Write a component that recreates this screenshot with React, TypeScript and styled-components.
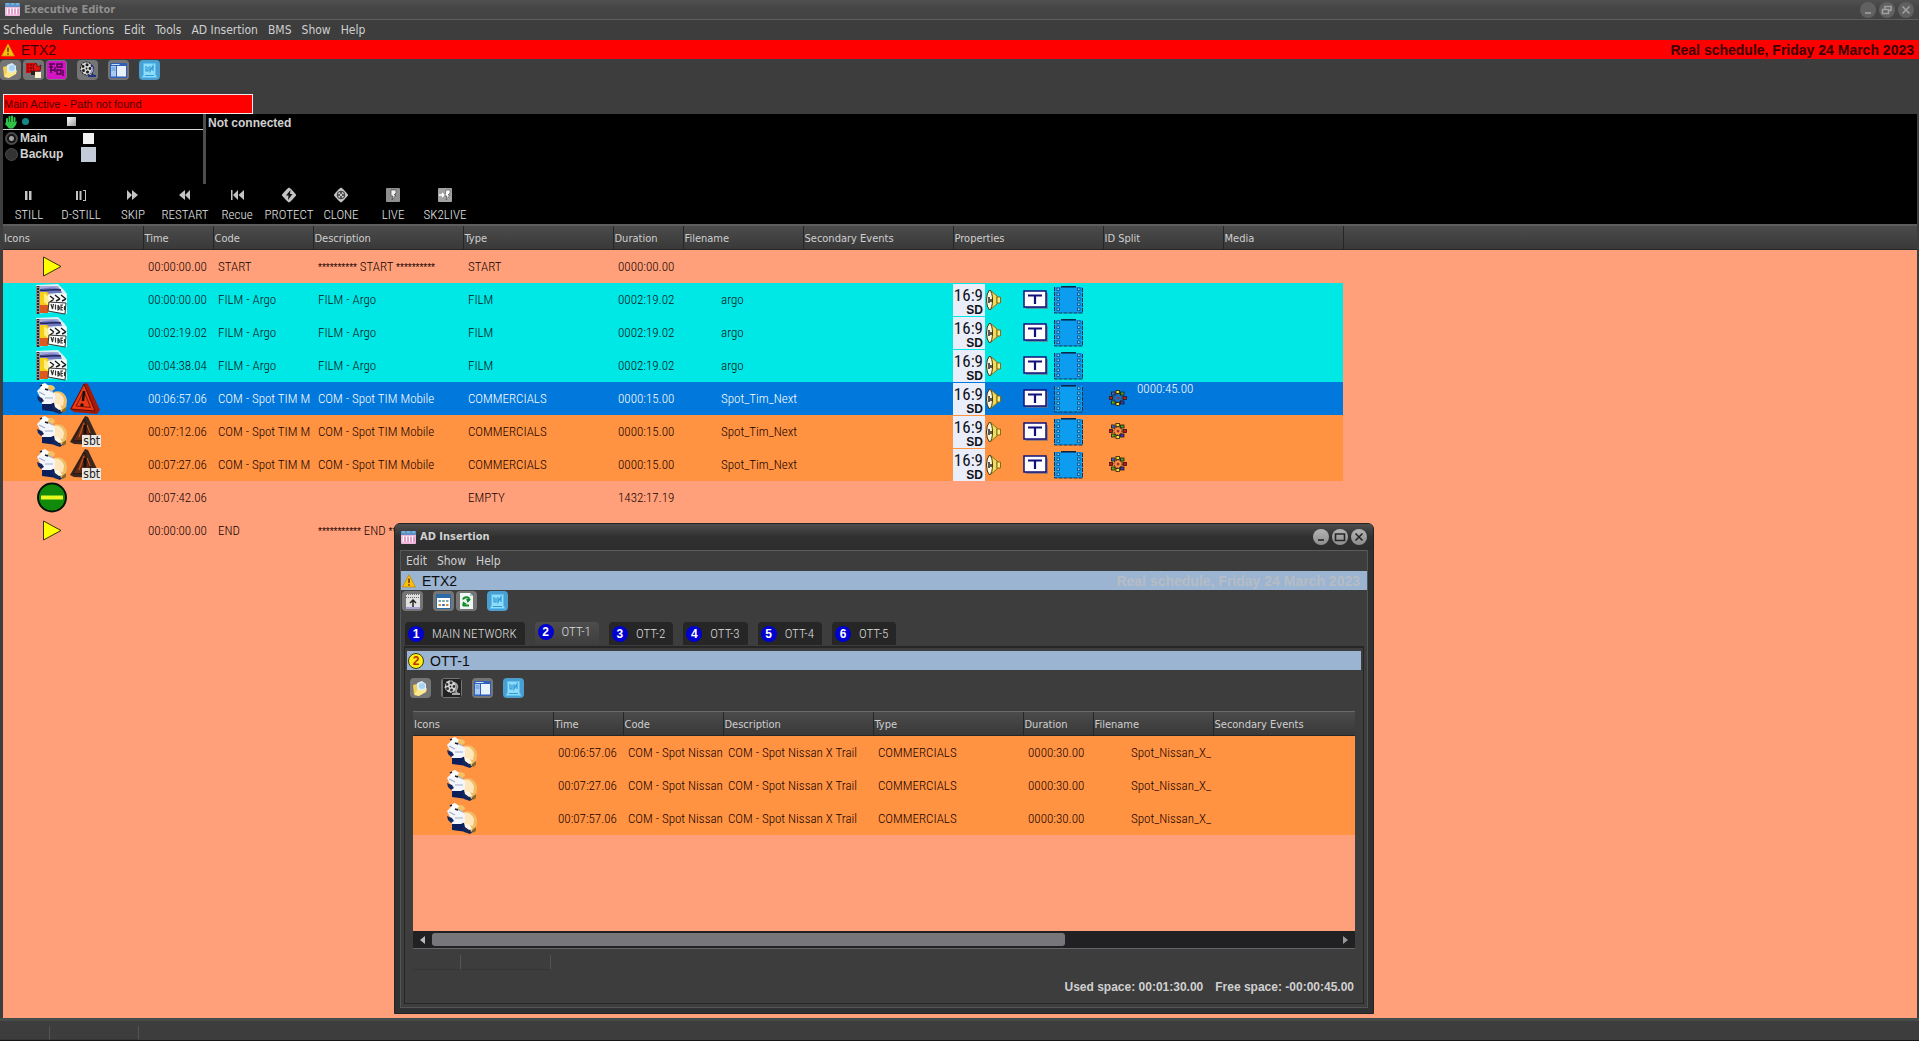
import React from "react";
import styled, { createGlobalStyle, css } from "styled-components";

const Global = createGlobalStyle`
  *, *::before, *::after { box-sizing: border-box; }
  body { margin: 0; background: #3d3d3d; overflow: hidden; }
  button, input { font: inherit; color: inherit; margin: 0; }
`;

const narrow = `"Roboto Condensed", "Liberation Sans Narrow", "Liberation Sans", sans-serif`;
const sans = `"Liberation Sans", Arial, sans-serif`;
const ui = `"DejaVu Sans Condensed", "Noto Sans", sans-serif`;

const Screen = styled.div`
  position: relative;
  display: flex;
  flex-direction: column;
  height: 100vh;
  background: #3d3d3d;
  color: #d0d0d0;
  font: 12px/16px ${ui};
  border-bottom: 1px solid #161616;
`;

const TitleBar = styled.header<{ $dialog?: boolean }>`
  display: flex;
  align-items: center;
  gap: 4px;
  ${(p) =>
    p.$dialog
      ? css`
          height: 26px;
          padding: 0 6px;
          background: linear-gradient(#4d4d4d, #303030 50%, #2d2d2d);
          color: #d0d0d0;
          border-radius: 4px 4px 0 0;
        `
      : css`
          height: 20px;
          padding: 0 5px;
          background: linear-gradient(#505050, #454545 40%, #434343);
          color: #8f8f8f;
          border-bottom: 1px solid #5e5e5e;
        `}
`;

const WindowTitle = styled.h1`
  flex: 1;
  margin: 0;
  font: bold 11px/16px ${ui};
`;

const WindowButtons = styled.div`
  display: flex;
  gap: 3px;
`;

const RoundButton = styled.button<{ $bright?: boolean }>`
  display: flex;
  width: 16px;
  height: 16px;
  padding: 0;
  border: 0;
  border-radius: 50%;
  background: ${(p) => (p.$bright ? "linear-gradient(#b4b4b4, #8d8d8d)" : "#616161")};
  color: ${(p) => (p.$bright ? "#262626" : "#a0a0a0")};
`;

const MenuBar = styled.nav<{ $dialog?: boolean }>`
  display: flex;
  align-items: center;
  gap: 10px;
  height: 20px;
  padding: 0 ${(p) => (p.$dialog ? 5 : 3)}px;
`;

const MenuItem = styled.button`
  padding: 0;
  border: 0;
  background: none;
  font: 12px/16px ${ui};
  white-space: nowrap;
`;

const Banner = styled.div<{ $tone: "alert" | "calm" }>`
  display: flex;
  align-items: center;
  gap: 6px;
  height: 19px;
  padding: 0 ${(p) => (p.$tone === "alert" ? 5 : 7)}px 0 1px;
  background: ${(p) => (p.$tone === "alert" ? "#ff0000" : "#9ab4d2")};
  color: ${(p) => (p.$tone === "alert" ? "#3c0000" : "#0c0c0c")};
  font: 14px/18px ${sans};
`;

const BannerDate = styled.strong<{ $faint?: boolean }>`
  margin-left: auto;
  color: ${(p) => (p.$faint ? "#b6bcc4" : "#3c0000")};
`;

const ToolBar = styled.div<{ $inset?: number }>`
  display: flex;
  gap: 2px;
  padding: 1px ${(p) => p.$inset ?? 0}px;
`;

const ToolButton = styled.button<{ $sky?: boolean; $apart?: boolean }>`
  display: flex;
  align-items: center;
  justify-content: center;
  width: 21px;
  height: 20px;
  margin-left: ${(p) => (p.$apart ? 8 : 0)}px;
  padding: 0;
  border: 0;
  border-radius: 4px;
  background: ${(p) => (p.$sky ? "#4a9fd0" : "#757575")};
`;

const StatusBox = styled.output`
  display: block;
  width: 250px;
  margin: 13px 0 0 3px;
  padding: 0;
  border: 1px solid #f4e6e6;
  background: #ff0000;
  color: #4a0000;
  font: 11px/18px ${sans};
`;

const Deck = styled.section`
  margin: 0 2px 0 3px;
  background: #000;
`;

const DeckTop = styled.div`
  display: flex;
  height: 70px;
`;

const Channels = styled.div`
  width: 203px;
  border-right: 3px solid #4d4d4d;
  font: bold 12px/16px ${sans};
`;

const ChannelHead = styled.div`
  display: flex;
  align-items: center;
  height: 16px;
  padding-left: 1px;
  border-bottom: 1px solid #d8d8d8;
`;

const Dot = styled.span`
  width: 7px;
  height: 7px;
  margin: 0 38px 0 4px;
  border-radius: 50%;
  background: #158787;
`;

const Cube = styled.span`
  width: 9px;
  height: 9px;
  background: linear-gradient(135deg, #fff, #9a9a9a);
`;

const Channel = styled.div`
  display: grid;
  grid-template-columns: 75px 20px;
  align-items: center;
  justify-items: center;
  height: 16px;
  & > label {
    justify-self: stretch;
    display: flex;
    align-items: center;
    gap: 2px;
    padding-left: 2px;
  }
  input {
    appearance: none;
    width: 13px;
    height: 13px;
    border: 1px solid #4b4b4b;
    border-radius: 50%;
    background: #333;
  }
  input:checked {
    background: radial-gradient(circle, #a2a2a2 0 2px, #161616 3px);
    border: 2px solid #4b4b4b;
  }
`;

const Swatch = styled.span<{ $size: number; $color: string }>`
  width: ${(p) => p.$size}px;
  height: ${(p) => p.$size}px;
  background: ${(p) => p.$color};
`;

const Connection = styled.p`
  margin: 1px 2px;
  font: bold 12px/16px ${sans};
`;

const Transport = styled.div`
  display: flex;
  height: 40px;
`;

const TransportButton = styled.button`
  display: flex;
  flex-direction: column;
  align-items: center;
  gap: 4px;
  width: 52px;
  padding: 3px 0 0;
  border: 0;
  background: none;
  color: #e6e6e6;
  font: 300 13px/16px ${narrow};
`;

const List = styled.div<{ $dialog?: boolean }>`
  overflow: hidden;
  background: #ffa07a;
  ${(p) =>
    p.$dialog
      ? css`
          height: 220px;
          margin: 12px 6px 0;
          border-top: 1px solid #6a6a6a;
        `
      : css`
          flex: 1;
          margin: 0 2px 0 3px;
          border-top: 2px solid #5d5d5d;
        `}
`;

const HeadBand = styled.div`
  background: linear-gradient(#4b4b4b, #393939);
  height: 24px;
  border-bottom: 1px solid #262626;
  margin-bottom: -24px;
`;

const Table = styled.table`
  table-layout: fixed;
  border-collapse: collapse;
  width: 0;
`;

const Th = styled.th`
  height: 24px;
  padding: 1px 0 0 1px;
  border-right: 1px solid #262626;
  color: #cfcfcf;
  font: 11px/16px ${ui};
  text-align: left;
  white-space: nowrap;
`;

type Tone = "plain" | "film" | "selected" | "spot";
const tones: Record<Tone, [string, string]> = {
  plain: ["transparent", "#140000"],
  film: ["#00e8e6", "#001014"],
  selected: ["#0078dc", "#ffffff"],
  spot: ["#ff9342", "#160000"],
};

const Tr = styled.tr<{ $tone: Tone }>`
  background: ${(p) => tones[p.$tone][0]};
  color: ${(p) => tones[p.$tone][1]};
`;

const Td = styled.td<{ $pad?: number }>`
  height: 33px;
  padding: 0 0 0 ${(p) => p.$pad ?? 5}px;
  overflow: hidden;
  font: 300 13px/16px ${narrow};
  white-space: nowrap;
`;

const Stars = styled.span`
  font: 10px/12px ${sans};
`;

const Icons = styled.div`
  display: flex;
  gap: 2px;
  height: 32px;
  align-items: center;
  svg { display: block; }
`;

const Ratio = styled.div`
  display: grid;
  width: 32px;
  height: 32px;
  padding: 1px 2px 0 0;
  background: #e9eefa;
  color: #101018;
  text-align: right;
  font: 400 17px/20px ${narrow};
  b { font: bold 12px/10px ${sans}; }
`;

const Props = styled(Icons)`
  gap: 0;
  & > svg:nth-child(3) { margin-left: 21px; }
  & > svg:nth-child(4) { margin-left: 6px; }
`;

const Split = styled.div`
  display: flex;
  gap: 10px;
  height: 33px;
  align-items: center;
  padding-bottom: 1px;
  span { align-self: flex-start; line-height: 14px; }
`;

const StatusBar = styled.footer<{ $dialog?: boolean }>`
  display: flex;
  ${(p) =>
    p.$dialog
      ? "height: 15px; margin: 6px 6px 0;"
      : "height: 22px; padding-top: 5px; border-top: 3px solid #454b48;"}
`;

const StatusCell = styled.span<{ $w: number }>`
  width: ${(p) => p.$w}px;
  border-right: 1px solid #545454;
  border-bottom: 1px solid #363636;
`;

const Dialog = styled.section`
  position: absolute;
  left: 394px;
  top: 523px;
  width: 980px;
  border: 1px solid #232323;
  border-radius: 6px 6px 0 0;
  background: #2e3032;
`;

const DialogBody = styled.div`
  margin: 0 5px 5px;
  padding-bottom: 3px;
  border: 1px solid #555;
  border-top-color: #5c5c5c;
  background: #3d3d3d;
`;

const TabList = styled.div`
  display: flex;
  align-items: flex-end;
  gap: 10px;
  height: 34px;
  padding: 0 4px;
`;

const Tab = styled.button<{ $active?: boolean }>`
  display: flex;
  align-items: center;
  gap: 8px;
  height: ${(p) => (p.$active ? 24 : 23)}px;
  padding: 0 8px 0 3px;
  padding-bottom: ${(p) => (p.$active ? 4 : 0)}px;
  margin-bottom: ${(p) => (p.$active ? 0 : 1)}px;
  border: 0;
  border-radius: 4px 4px 0 0;
  background: ${(p) => (p.$active ? "linear-gradient(#4d4d4d, #3d3d3d)" : "#262626")};
  color: #dedede;
  font: 300 13px/16px ${narrow};
`;

const Badge = styled.span<{ $gold?: boolean }>`
  width: 16px;
  height: 16px;
  border-radius: 50%;
  background: ${(p) => (p.$gold ? "#ffee10" : "#0000d0")};
  color: ${(p) => (p.$gold ? "#c03000" : "#fff")};
  border: ${(p) => (p.$gold ? "1px solid #3a3a10" : "0")};
  font: bold 12px/${(p) => (p.$gold ? 14 : 16)}px ${sans};
  text-align: center;
`;

const TabPanel = styled.div`
  margin: 0 3px;
  padding: 3px 2px 8px;
  border: 1px solid #262626;
  border-top-width: 2px;
`;

const PanelTools = styled.div`
  padding-top: 7px;
`;

const ScrollBar = styled.div`
  display: flex;
  align-items: center;
  height: 18px;
  margin: 0 6px;
  padding: 2px 0;
  border-bottom: 1px solid #666;
  background: #212123;
`;

const ScrollArrow = styled.button`
  display: flex;
  align-items: center;
  justify-content: center;
  width: 19px;
  padding: 0;
  border: 0;
  background: none;
`;

const ScrollTrack = styled.div`
  flex: 1;
  height: 13px;
`;

const ScrollThumb = styled.div`
  width: 70%;
  height: 13px;
  border-radius: 3px;
  background: #77777b;
`;

const Totals = styled.div`
  display: flex;
  justify-content: flex-end;
  gap: 12px;
  padding: 9px 7px 0;
  font: bold 12px/16px ${sans};
`;

/* ---------- drawings ---------- */

const AppIcon = () => (
  <svg width="15" height="13" viewBox="0 0 15 13">
    <rect width="15" height="13" rx="1" fill="#f0b8dc" />
    <rect width="15" height="4" fill="#5e92c4" />
    <path d="M1 1h3M6 1h3M11 1h3" stroke="#8fd0f0" />
    <path d="M2.500 5v6M5.500 5v6M8.500 5v6M11.500 5v6" stroke="#fff" strokeWidth="1.300" />
    <path d="M4 6v5M7 6v5M10 6v5M13 6v5" stroke="#d86aa8" strokeWidth=".8" />
  </svg>
);

const Glyph = ({ d }: { d: string }) => (
  <svg width="16" height="16" viewBox="0 0 16 16" fill="none" stroke="currentColor" strokeWidth="1.600">
    <path d={d} />
  </svg>
);

const Warning = () => (
  <svg width="14" height="14" viewBox="0 0 14 14">
    <path d="M7 .8 13.400 13H.6z" fill="#fdc010" stroke="#c58a00" strokeWidth=".8" strokeLinejoin="round" />
    <path d="M7 4.500v4.500M7 10.200v1.500" stroke="#5a3c00" strokeWidth="1.500" />
  </svg>
);

const FolderIcon = () => (
  <svg width="17" height="17" viewBox="0 0 17 17">
    <path d="M1 5l4-1 2 2v10l-5-2z" fill="#f2cf55" />
    <path d="M5 3 10 1l4 3v6l-4 3-5-2z" fill="#d8eefa" />
    <circle cx="10" cy="6" r="3" fill="#a8d2ee" />
    <path d="m2 15 4-6 4 2 5-3-1 4-7 4z" fill="#ffe98e" />
  </svg>
);
const ScheduleRedIcon = () => (
  <svg width="17" height="17" viewBox="0 0 17 17">
    <path d="M1 1h9v10H1z" fill="#d80808" />
    <path d="M2 3h7M2 6h7M2 9h5" stroke="#5a0000" strokeDasharray="2 1" />
    <path d="m8 4 3-3 2 4 3-2-1 6H9z" fill="#e31212" stroke="#500" strokeWidth=".7" />
    <path d="M10 10h6v6h-6z" fill="#fff2cf" />
    <path d="M6 9h4v4H6z" fill="#222" />
  </svg>
);
const SchedulePinkIcon = () => (
  <svg width="19" height="18" viewBox="0 0 19 18">
    <rect width="19" height="18" rx="2" fill="#d414c4" />
    <path d="M2 3h6M2 6h4M3 9h5M10 3h5v3h-5zM4 3v9M8 6v5M10 9h4v4h-4zM16 9v6" fill="none" stroke="#4b0648" strokeWidth="1.400" />
  </svg>
);
const ReelIcon = ({ grey }: { grey?: boolean }) => (
  <svg width="18" height="18" viewBox="0 0 18 18">
    {grey && <rect width="18" height="18" fill="#222" />}
    <ellipse cx="7.500" cy="7.500" rx="6" ry="6.500" fill="#d5d5d5" stroke="#1a1a1a" strokeDasharray="2 1" transform="rotate(-20 7.500 7.500)" />
    <g fill={grey ? "#333" : "#1a1a1a"}>
      <circle cx="8" cy="3.800" r="1.500" /><circle cx="4" cy="5.500" r="1.400" /><circle cx="11" cy="7.500" r="1.400" />
      <circle cx="4.500" cy="9.500" r="1.500" /><circle cx="8.500" cy="11" r="1.500" /><circle cx="7.500" cy="7.500" r=".9" />
    </g>
    <path d="M12 4c4 3 2 5 1 8 0 2 2 3 4 3M9 15h6" fill="none" stroke={grey ? "#aaa" : "#23307c"} strokeWidth="1.800" />
    <path d="M13 6c2 3 0 5-2 8" stroke={grey ? "#888" : "#b9bfd8"} fill="none" />
  </svg>
);
const LayoutIcon = () => (
  <svg width="17" height="15" viewBox="0 0 17 15">
    <rect width="17" height="15" rx="1" fill="#2f5fb8" />
    <path d="M1 3h5v10.500H1z" fill="#a9ccf4" />
    <path d="M7 3h9v10.500H7z" fill="#e8f2fc" />
    <path d="M1.500 1.500h8" stroke="#c8dcf6" />
    <path d="M1.500 5h4M1.500 7h4" stroke="#5c8ad0" />
  </svg>
);
const WordIcon = () => (
  <svg width="17" height="17" viewBox="0 0 17 17" fill="none">
    <path d="M2.500 1.500h12v11l1.500 3H1l1.500-3z" fill="#8fdcfa" stroke="#5cc0f0" />
    <path d="M5 4v5h2v-4M9 4v5l3-5v5M4 13.500h9" stroke="#2f9ad6" strokeWidth="1.200" />
  </svg>
);
const UploadIcon = () => (
  <svg width="16" height="17" viewBox="0 0 16 17">
    <path d="M1 1h14v13H1z" fill="#e0e0e0" />
    <path d="M1 1.500h14M1 4.500h14" stroke="#666" strokeDasharray="1 1" />
    <path d="M8 14V7M5 10l3-3 3 3" stroke="#222" strokeWidth="1.500" fill="none" />
    <path d="M1 15h14" stroke="#a5a5d8" strokeWidth="2" />
  </svg>
);
const CalendarIcon = () => (
  <svg width="15" height="15" viewBox="0 0 15 15">
    <rect width="15" height="15" rx="1" fill="#2d6aa8" />
    <path d="M1 4h13v10H1z" fill="#fff" />
    <path d="M2.500 7h2.500M6.200 7h2.500M10 7h2.500" stroke="#7aa0a8" strokeWidth="2" />
    <path d="M2.500 11h2.500M10 11h2.500" stroke="#d0903c" strokeWidth="2" />
    <path d="M6.200 11h2.500" stroke="#3a62b0" strokeWidth="2" />
  </svg>
);
const RefreshIcon = () => (
  <svg width="13" height="16" viewBox="0 0 13 16">
    <path d="M0 0h10l3 3v13H0z" fill="#eef6f4" />
    <path d="M10 0v3h3" fill="#9cc" />
    <path d="M3 6.500c1-3 6-3 6 0q0 1-2 2M3 12.500h6" fill="none" stroke="#17882a" strokeWidth="2" />
    <path d="M6 6h5L8 9.500zM2 13l1-4.500 4 2.500z" fill="#17882a" />
  </svg>
);
const HandIcon = () => (
  <svg width="14" height="14" viewBox="0 0 14 14">
    <path d="M3 8V4M5.500 7V2M8 7V1.500M10.500 8V3" stroke="#2fc046" strokeWidth="2" strokeLinecap="round" />
    <path d="M2 7h9.500l1.500-1-1 4-3 3.500H5L1 9z" fill="#2fc046" />
  </svg>
);

const transportIcons: Record<string, React.ReactNode> = {
  STILL: <path d="M4 4h2.500v9H4zM8 4h2.500v9H8z" />,
  "D-STILL": <path d="M3 4h2v9H3zM6.500 4h2v9h-2zM10 3h3v11h-3v-1h2V4h-2z" />,
  SKIP: <path d="M2 3l5 5-5 5zM7 3l6 5-6 5z" />,
  RESTART: <path d="M8 3 2 8l6 5zM13 3 8 8l5 5z" />,
  Recue: <path d="M2 3h1.500v10H2zM9 3 4 8l5 5zM15 3 9.500 8l5.500 5z" />,
  PROTECT: (
    <>
      <path d="M8 .5Q9 .5 15 7.500v1Q9 15.500 8 15.500 7 15.500 1 8.500v-1Q7 .5 8 .5z" />
      <path d="M9.500 3 5 8.500h2.500L7 13l4.500-6H9z" fill="#111" />
    </>
  ),
  CLONE: (
    <>
      <path d="M8 .5Q9 .5 15 7.500v1Q9 15.500 8 15.500 7 15.500 1 8.500v-1Q7 .5 8 .5z" />
      <circle cx="8" cy="8" r="3.800" fill="none" stroke="#333" />
      <circle cx="8" cy="6" r="1" fill="#333" /><circle cx="8" cy="10" r="1" fill="#333" />
      <circle cx="6" cy="8" r="1" fill="#333" /><circle cx="10" cy="8" r="1" fill="#333" />
    </>
  ),
  LIVE: (
    <>
      <rect x="1" y="1" width="14" height="14" rx="1" fill="#8f8f8f" />
      <path d="M6 3h5v3L9 8h2l-4 5 1-4H6z" fill="#f2f2f2" stroke="#333" strokeWidth=".6" />
    </>
  ),
  SK2LIVE: (
    <>
      <rect x="1" y="1" width="14" height="14" rx="1" fill="#a2a2a2" />
      <path d="M2 8h5M5 6l2 2-2 2" stroke="#fff" strokeWidth="1.300" fill="none" />
      <path d="M9 3h4v3l-2 2h2l-4 5 1-4H8z" fill="#fff" stroke="#444" strokeWidth=".6" />
    </>
  ),
};

const Play = () => (
  <svg width="32" height="31" viewBox="0 0 32 31">
    <path d="M7.500 6v19L25 15.500z" fill="#ffff00" stroke="#35350a" />
  </svg>
);
const Empty = () => (
  <svg width="32" height="31" viewBox="0 0 32 31">
    <circle cx="16" cy="15.500" r="14" fill="#118a0c" stroke="#06140a" strokeWidth="2" />
    <path d="M5 15.500h22" stroke="#e6f820" strokeWidth="4" />
  </svg>
);
const Video = () => (
  <svg width="32" height="31" viewBox="0 0 32 31">
    <path d="M0 1 22 0l6 6 3 4v20l-13-2-18 2z" fill="#dff0f4" />
    <path d="M4 2h18l4 6-21 4z" fill="#a9a6dc" />
    <path d="M4 5c7-1 12-3 20 0l2 4H4z" fill="#7078c0" />
    <path d="M4 6c6 1 12-1 21 0" stroke="#20265a" strokeWidth="1.500" fill="none" />
    <path d="M4 8h7l3 4-1 16H4z" fill="#f8cf14" />
    <path d="M8 9l5 4-1 8-4-3z" fill="#fff08a" />
    <path d="M4 21h8v8H4z" fill="#dc5a20" />
    <path d="M2 2v28" stroke="#2a2a2a" strokeWidth="3" />
    <path d="M2 3v27" stroke="#d8d8d8" strokeWidth="1.200" strokeDasharray="1 2" />
    <path d="M12 11 30 10l1 7-18 2z" fill="#fff" />
    <path d="m14 12 4 3M19 11l5 4M25 11l5 4M14 18l4-3M20 17l4-2M26 17l4-2" stroke="#1a1a1a" strokeWidth="1.500" fill="none" />
    <path d="m13 18 17 1-1 11-17-3z" fill="#fff" stroke="#333" />
    <path d="m15 20 1.500 5 1-5M19.500 20.500v5M22 21v5q3-1 0-5M27 21h-2v5h2M25 23.500h2M28.500 22v4" stroke="#333" fill="none" strokeWidth="1.200" />
  </svg>
);
const Spot = () => (
  <svg width="32" height="31" viewBox="0 0 32 31">
    <path d="M6 20h12l5 3-2 6-15-2z" fill="#0b1f5c" />
    <path d="M16 23h10l2 5-4 3-6-2z" fill="#14285c" />
    <path d="M18 9c7-3 13 3 13 9l-1 8-5 3-2-6-6-5z" fill="#f0bd66" />
    <path d="M17 10c5-2 10 2 11 7l-1 6-8-2-3-5z" fill="#ffe7bb" />
    <path d="M1 8 5 4l10 2 4 6v7l-4 2H6l-1-5z" fill="#f3f6fc" />
    <path d="M10 3c3-2 9-1 9 3l-3 2-6-1z" fill="#f2c266" />
    <path d="M4 2 9 0l4 3-2 3-6 1z" fill="#fff" />
    <path d="M11 6l6 3M3 9l6 3M9 15h8" stroke="#a4aec4" fill="none" strokeWidth="1.200" />
    <path d="M4 3l2-1M9 6l3 1" stroke="#15192a" strokeWidth="1.500" />
    <path d="M1 13l5 2 2 3-3 2-3-3z" fill="#14285c" />
    <path d="m18 20 6 2 2 4-3 1-4-3z" fill="#fff6e2" />
    <path d="m26 27 4-3v4l-3 2z" fill="#8a6a28" />
  </svg>
);
const Alert = () => (
  <svg width="30" height="31" viewBox="0 0 30 31">
    <path d="M15 0 18 1 30 27 27 31 4 29 0 26z" fill="#a41a06" />
    <path d="M14 1 25 28 1 26z" fill="#ee3a14" stroke="#5a0e04" />
    <path d="M14 8 20.500 24.500 6 23z" fill="none" stroke="#7c1606" />
    <path d="M14 8 13 18" stroke="#111" strokeWidth="2.500" />
    <circle cx="12" cy="22" r="1.700" fill="#111" />
  </svg>
);
const SbtBox = styled.span`
  position: relative;
  display: block;
  width: 30px;
  height: 31px;
`;
const SbtLabel = styled.span`
  position: absolute;
  right: -1px;
  bottom: 0;
  padding: 0 1px;
  background: #ece8e4;
  color: #222;
  font: 12px/12px ${ui};
`;
const Sbt = () => (
  <SbtBox>
    <svg width="30" height="31" viewBox="0 0 30 31">
      <path d="M15 0 18 1 27 20 26 29 4 28 0 26z" fill="#3a281e" />
      <path d="M14 3 22 24 3 25z" fill="#5c2c18" stroke="#241510" />
      <path d="M14 7 9 21M17 9l3 8" stroke="#d0501c" strokeWidth="1.200" />
      <path d="M15 9v9" stroke="#15100e" strokeWidth="3" />
    </svg>
    <SbtLabel>sbt</SbtLabel>
  </SbtBox>
);
const Speaker = () => (
  <svg width="17" height="22" viewBox="0 0 17 22">
    <path d="M5 1 12 7v8L5 21z" fill="#f2dc5c" stroke="#8a6d10" />
    <path d="M12 8h3.500v6H12z" fill="#f7ea85" stroke="#8a6d10" />
    <path d="M4.500 1q3 2 3 10t-3 10q-3-3-3-10t3-10z" fill="#fff8d8" stroke="#3a3014" />
    <path d="M4 8v6M6 10v3" stroke="#222" strokeWidth="1.500" />
  </svg>
);
const TitleTag = () => (
  <svg width="25" height="19" viewBox="0 0 25 19">
    <path d="M3 3h22v16H3z" fill="#6f7488" opacity=".7" />
    <path d="M1 1h22v16H1z" fill="#fdfdff" stroke="#10107a" strokeWidth="1.500" />
    <path d="M5 5.500h14M12 5v9" stroke="#10107a" strokeWidth="2.200" />
  </svg>
);
const FilmStrip = () => (
  <svg width="29" height="28" viewBox="0 0 29 28">
    <path d="M.5 1h6l1-.5h14l1 .5h6v26H.5z" fill="#0c9cf0" />
    <path d="M7 .8h15" stroke="#072240" strokeWidth="1.500" />
    <path d="M.5 1v26h28V1" fill="none" stroke="#14324e" strokeDasharray="4 1" />
    {[2, 7, 12, 17, 22].map((y) => (
      <g key={y} fill="#8fd0f4" stroke="#0b4c80" strokeWidth=".8">
        <rect x="3" y={y} width="2.500" height="2.500" />
        <rect x="23.500" y={y} width="2.500" height="2.500" />
      </g>
    ))}
  </svg>
);
const Wheel = () => (
  <svg width="18" height="16" viewBox="0 0 18 16">
    <circle cx="9" cy="8" r="4" fill="none" stroke="#5b3a24" strokeWidth="1.500" strokeDasharray="1 1" />
    <circle cx="9" cy="8" r="1.500" fill="#a03030" />
    {[
      [0, 6.500, "#c01818"], [2.500, 2, "#3a6ad0"], [7, 0.500, "#e8e020"], [11.500, 2, "#40a030"],
      [14, 6.500, "#c01818"], [11.500, 11, "#3838c8"], [7, 12.500, "#f0e838"], [2.500, 11, "#60b020"],
    ].map(([x, y, c], i) => (
      <rect key={i} x={x} y={y} width="3.500" height="3" fill={c as string} stroke="#251a10" strokeWidth=".8" />
    ))}
  </svg>
);

/* ---------- data ---------- */

type Row = {
  tone: Tone;
  icons: React.ReactNode;
  time: string;
  code?: string;
  desc?: React.ReactNode;
  type?: string;
  dur?: string;
  file?: string;
  props?: boolean;
  split?: string;
};

const columns: [string, number][] = [
  ["Icons", 140], ["Time", 70], ["Code", 100], ["Description", 150], ["Type", 150], ["Duration", 70],
  ["Filename", 120], ["Secondary Events", 150], ["Properties", 150], ["ID Split", 120], ["Media", 120],
];

const starred = (word: string, count: number) => {
  const stars = <Stars>{"*".repeat(count)}</Stars>;
  return <>{stars} {word} {stars}</>;
};

const film = (time: string): Row => ({
  tone: "film", icons: <Video />, time, code: "FILM - Argo", desc: "FILM - Argo", type: "FILM",
  dur: "0002:19.02", file: "argo", props: true,
});
const tim = (time: string, tone: Tone, mark: React.ReactNode, split = ""): Row => ({
  tone, icons: <><Spot />{mark}</>, time, code: "COM - Spot TIM M", desc: "COM - Spot TIM Mobile",
  type: "COMMERCIALS", dur: "0000:15.00", file: "Spot_Tim_Next", props: true, split,
});
const nissan = (time: string): Row => ({
  tone: "spot", icons: <Spot />, time, code: "COM - Spot Nissan", desc: "COM - Spot Nissan X Trail",
  type: "COMMERCIALS", dur: "0000:30.00", file: "Spot_Nissan_X_",
});

const schedule: Row[] = [
  { tone: "plain", icons: <Play />, time: "00:00:00.00", code: "START", desc: starred("START", 10), type: "START", dur: "0000:00.00" },
  film("00:00:00.00"),
  film("00:02:19.02"),
  film("00:04:38.04"),
  tim("00:06:57.06", "selected", <Alert />, "0000:45.00"),
  tim("00:07:12.06", "spot", <Sbt />),
  tim("00:07:27.06", "spot", <Sbt />),
  { tone: "plain", icons: <Empty />, time: "00:07:42.06", type: "EMPTY", dur: "1432:17.19" },
  { tone: "plain", icons: <Play />, time: "00:00:00.00", code: "END", desc: starred("END", 11) },
];
const inserts = [nissan("00:06:57.06"), nissan("00:07:27.06"), nissan("00:07:57.06")];

const EventTable = ({ rows, count }: { rows: Row[]; count: number }) => (
  <>
    <HeadBand />
    <Table>
      <colgroup>
        {columns.slice(0, count).map(([n, w]) => <col key={n} style={{ width: w }} />)}
      </colgroup>
      <thead>
        <tr>{columns.slice(0, count).map(([n]) => <Th key={n} scope="col">{n}</Th>)}</tr>
      </thead>
      <tbody>
        {rows.map((r, i) => (
          <Tr key={i} $tone={r.tone}>
            <Td $pad={33}><Icons>{r.icons}</Icons></Td>
            <Td>{r.time}</Td>
            <Td>{r.code}</Td>
            <Td>{r.desc}</Td>
            <Td>{r.type}</Td>
            <Td>{r.dur}</Td>
            <Td $pad={38}>{r.file}</Td>
            <Td />
            {count > 8 && (
              <>
                <Td $pad={0}>
                  {r.props && (
                    <Props>
                      <Ratio>16:9<b>SD</b></Ratio>
                      <Speaker />
                      <TitleTag />
                      <FilmStrip />
                    </Props>
                  )}
                </Td>
                <Td $pad={6}>
                  {r.split !== undefined && <Split><Wheel /><span>{r.split}</span></Split>}
                </Td>
                <Td />
              </>
            )}
          </Tr>
        ))}
      </tbody>
    </Table>
  </>
);

const Controls = ({ bright }: { bright?: boolean }) => (
  <WindowButtons>
    <RoundButton $bright={bright} aria-label="Minimize"><Glyph d="M5 11h6" /></RoundButton>
    <RoundButton $bright={bright} aria-label={bright ? "Maximize" : "Restore"}>
      <Glyph d={bright ? "M3.500 5h9v6.500h-9z" : "M3.500 7.500h6v4h-6zM6 7V4.500h6v4h-2"} />
    </RoundButton>
    <RoundButton $bright={bright} aria-label="Close"><Glyph d="M4.500 4.500l7 7M11.500 4.500l-7 7" /></RoundButton>
  </WindowButtons>
);

const menus = ["Schedule", "Functions", "Edit", "Tools", "AD Insertion", "BMS", "Show", "Help"];
const tabs = ["MAIN NETWORK", "OTT-1", "OTT-2", "OTT-3", "OTT-4", "OTT-5"];

export default function App() {
  return (
    <Screen>
      <Global />
      <TitleBar>
        <AppIcon />
        <WindowTitle>Executive Editor</WindowTitle>
        <Controls />
      </TitleBar>
      <MenuBar>{menus.map((m) => <MenuItem key={m}>{m}</MenuItem>)}</MenuBar>
      <Banner $tone="alert">
        <Warning />
        <span>ETX2</span>
        <BannerDate>Real schedule, Friday 24 March 2023</BannerDate>
      </Banner>
      <ToolBar>
        <ToolButton aria-label="Open"><FolderIcon /></ToolButton>
        <ToolButton aria-label="Save schedule"><ScheduleRedIcon /></ToolButton>
        <ToolButton aria-label="Merge schedule"><SchedulePinkIcon /></ToolButton>
        <ToolButton $apart aria-label="Clips"><ReelIcon /></ToolButton>
        <ToolButton $apart aria-label="Layout"><LayoutIcon /></ToolButton>
        <ToolButton $apart $sky aria-label="Report"><WordIcon /></ToolButton>
      </ToolBar>
      <StatusBox>Main Active - Path not found</StatusBox>
      <Deck>
        <DeckTop>
          <Channels>
            <ChannelHead><HandIcon /><Dot /><Cube /></ChannelHead>
            <Channel>
              <label><input type="radio" name="channel" defaultChecked />Main</label>
              <Swatch $size={11} $color="#f2f2f2" />
            </Channel>
            <Channel>
              <label><input type="radio" name="channel" />Backup</label>
              <Swatch $size={15} $color="#c3cbd8" />
            </Channel>
          </Channels>
          <Connection>Not connected</Connection>
        </DeckTop>
        <Transport>
          {Object.entries(transportIcons).map(([name, icon]) => (
            <TransportButton key={name}>
              <svg width="16" height="16" viewBox="0 0 16 16" fill="#c4c4c4">{icon}</svg>
              {name}
            </TransportButton>
          ))}
        </Transport>
      </Deck>
      <List><EventTable rows={schedule} count={11} /></List>
      <StatusBar><StatusCell $w={50} /><StatusCell $w={89} /></StatusBar>

      <Dialog role="dialog" aria-label="AD Insertion">
        <TitleBar $dialog>
          <AppIcon />
          <WindowTitle>AD Insertion</WindowTitle>
          <Controls bright />
        </TitleBar>
        <DialogBody>
          <MenuBar $dialog>{["Edit", "Show", "Help"].map((m) => <MenuItem key={m}>{m}</MenuItem>)}</MenuBar>
          <Banner $tone="calm">
            <Warning />
            <span>ETX2</span>
            <BannerDate $faint>Real schedule, Friday 24 March 2023</BannerDate>
          </Banner>
          <ToolBar $inset={1}>
            <ToolButton aria-label="Export"><UploadIcon /></ToolButton>
            <ToolButton $apart aria-label="Calendar"><CalendarIcon /></ToolButton>
            <ToolButton aria-label="Refresh"><RefreshIcon /></ToolButton>
            <ToolButton $apart $sky aria-label="Report"><WordIcon /></ToolButton>
          </ToolBar>
          <TabList role="tablist">
            {tabs.map((t, i) => (
              <Tab key={t} role="tab" $active={i === 1} aria-selected={i === 1}>
                <Badge>{i + 1}</Badge>{t}
              </Tab>
            ))}
          </TabList>
          <TabPanel role="tabpanel">
            <Banner $tone="calm"><Badge $gold>2</Badge><span>OTT-1</span></Banner>
            <PanelTools>
              <ToolBar $inset={3}>
                <ToolButton aria-label="Open"><FolderIcon /></ToolButton>
                <ToolButton $apart aria-label="Clips"><ReelIcon grey /></ToolButton>
                <ToolButton $apart aria-label="Layout"><LayoutIcon /></ToolButton>
                <ToolButton $apart $sky aria-label="Report"><WordIcon /></ToolButton>
              </ToolBar>
            </PanelTools>
            <List $dialog><EventTable rows={inserts} count={8} /></List>
            <ScrollBar>
              <ScrollArrow aria-label="Scroll left">
                <svg width="5" height="8" viewBox="0 0 5 8"><path d="M5 0v8L0 4z" fill="#bbb" /></svg>
              </ScrollArrow>
              <ScrollTrack><ScrollThumb /></ScrollTrack>
              <ScrollArrow aria-label="Scroll right">
                <svg width="5" height="8" viewBox="0 0 5 8"><path d="M0 0v8l5-4z" fill="#999" /></svg>
              </ScrollArrow>
            </ScrollBar>
            <StatusBar $dialog><StatusCell $w={48} /><StatusCell $w={90} /></StatusBar>
            <Totals><span>Used space: 00:01:30.00</span><span>Free space: -00:00:45.00</span></Totals>
          </TabPanel>
        </DialogBody>
      </Dialog>
    </Screen>
  );
}
